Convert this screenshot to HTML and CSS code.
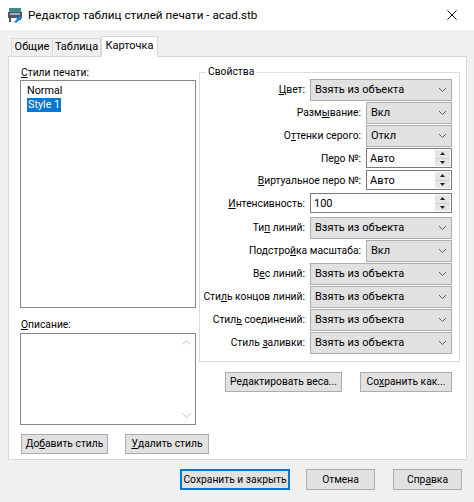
FILE: index.html
```html
<!DOCTYPE html>
<html lang="ru">
<head>
<meta charset="utf-8">
<title>Редактор таблиц стилей печати</title>
<link rel="stylesheet" href="styles.css">
</head>
<body>
<div class="window">
  <div class="titlebar">
    <svg class="appicon" width="16" height="16" viewBox="0 0 16 16">
      <rect x="2" y="1" width="12" height="4" fill="#3c8c8c"/>
      <rect x="1" y="5" width="14" height="6" fill="#555"/>
      <rect x="3" y="6" width="10" height="2" fill="#9ad"/>
      <rect x="2" y="11" width="2" height="4" fill="#555"/>
      <rect x="12" y="11" width="2" height="2" fill="#555"/>
      <path d="M7 15 L13 9 L15 11 L9 16 Z" fill="#1e7fd8"/>
      <path d="M9 10 L11 12" stroke="#1e7fd8" stroke-width="1.5"/>
    </svg>
    <span class="title">Редактор таблиц стилей печати - acad.stb</span>
    <svg class="close" width="10" height="10" viewBox="0 0 10 10">
      <path d="M0.5 0.5 L9.5 9.5 M9.5 0.5 L0.5 9.5" stroke="#111" stroke-width="1"/>
    </svg>
  </div>
  <div class="body">
    <div class="tabs">
      <div class="tab t1">Общие</div>
      <div class="tab t2">Таблица</div>
      <div class="tab t3 active">Карточка</div>
    </div>
    <div class="panel">
      <div class="leftcol">
        <div class="lbl"><u>С</u>тили печати:</div>
        <div class="listbox">
          <div class="item">Normal</div>
          <div class="item"><span class="sel">Style 1</span></div>
        </div>
        <div class="lbl desc-lbl"><u>О</u>писание:</div>
        <div class="textarea">
          <div class="ta-text"></div>
          <div class="vscroll">
            <svg width="9" height="5" viewBox="0 0 9 5"><path d="M0.5 4.5 L4.5 0.5 L8.5 4.5" fill="none" stroke="#c2c2c2" stroke-width="1"/></svg>
            <svg width="9" height="5" viewBox="0 0 9 5"><path d="M0.5 0.5 L4.5 4.5 L8.5 0.5" fill="none" stroke="#c2c2c2" stroke-width="1"/></svg>
          </div>
        </div>
        <div class="btnrow">
          <div class="btn add">До<u>б</u>авить стиль</div>
          <div class="btn del"><u>У</u>далить стиль</div>
        </div>
      </div>
      <div class="rightcol">
        <fieldset class="group">
          <legend>Свойства</legend>
          <div class="row"><span class="rl"><u>Ц</u>вет:</span><div class="combo wide"><span>Взять из объекта</span><svg width="7" height="4" viewBox="0 0 7 4"><path d="M0 0 L3.5 3.5 L7 0" fill="none" stroke="#606060"/></svg></div></div>
          <div class="row"><span class="rl">Разм<u>ы</u>вание:</span><div class="combo narrow"><span>Вкл</span><svg width="7" height="4" viewBox="0 0 7 4"><path d="M0 0 L3.5 3.5 L7 0" fill="none" stroke="#606060"/></svg></div></div>
          <div class="row"><span class="rl">О<u>т</u>тенки серого:</span><div class="combo narrow"><span>Откл</span><svg width="7" height="4" viewBox="0 0 7 4"><path d="M0 0 L3.5 3.5 L7 0" fill="none" stroke="#606060"/></svg></div></div>
          <div class="row er"><span class="rl">Пе<u>р</u>о №:</span><div class="edit narrow"><span>Авто</span><div class="spin"><div class="sp"><svg width="5" height="3" viewBox="0 0 5 3"><path d="M0 3 L2.5 0 L5 3 Z" fill="#222"/></svg></div><div class="sp"><svg width="5" height="3" viewBox="0 0 5 3"><path d="M0 0 L2.5 3 L5 0 Z" fill="#222"/></svg></div></div></div></div>
          <div class="row er"><span class="rl"><u>В</u>иртуальное перо №:</span><div class="edit narrow"><span>Авто</span><div class="spin"><div class="sp"><svg width="5" height="3" viewBox="0 0 5 3"><path d="M0 3 L2.5 0 L5 3 Z" fill="#222"/></svg></div><div class="sp"><svg width="5" height="3" viewBox="0 0 5 3"><path d="M0 0 L2.5 3 L5 0 Z" fill="#222"/></svg></div></div></div></div>
          <div class="row er last-edit"><span class="rl"><u>И</u>нтенсивность:</span><div class="edit wide"><span>100</span><div class="spin"><div class="sp"><svg width="5" height="3" viewBox="0 0 5 3"><path d="M0 3 L2.5 0 L5 3 Z" fill="#222"/></svg></div><div class="sp"><svg width="5" height="3" viewBox="0 0 5 3"><path d="M0 0 L2.5 3 L5 0 Z" fill="#222"/></svg></div></div></div></div>
          <div class="row"><span class="rl">Ти<u>п</u> линий:</span><div class="combo wide"><span>Взять из объекта</span><svg width="7" height="4" viewBox="0 0 7 4"><path d="M0 0 L3.5 3.5 L7 0" fill="none" stroke="#606060"/></svg></div></div>
          <div class="row"><span class="rl">Подстро<u>й</u>ка масштаба:</span><div class="combo narrow"><span>Вкл</span><svg width="7" height="4" viewBox="0 0 7 4"><path d="M0 0 L3.5 3.5 L7 0" fill="none" stroke="#606060"/></svg></div></div>
          <div class="row"><span class="rl">В<u>е</u>с линий:</span><div class="combo wide"><span>Взять из объекта</span><svg width="7" height="4" viewBox="0 0 7 4"><path d="M0 0 L3.5 3.5 L7 0" fill="none" stroke="#606060"/></svg></div></div>
          <div class="row"><span class="rl">Сти<u>л</u>ь концов линий:</span><div class="combo wide"><span>Взять из объекта</span><svg width="7" height="4" viewBox="0 0 7 4"><path d="M0 0 L3.5 3.5 L7 0" fill="none" stroke="#606060"/></svg></div></div>
          <div class="row"><span class="rl">Стил<u>ь</u> соединений:</span><div class="combo wide"><span>Взять из объекта</span><svg width="7" height="4" viewBox="0 0 7 4"><path d="M0 0 L3.5 3.5 L7 0" fill="none" stroke="#606060"/></svg></div></div>
          <div class="row"><span class="rl">Стиль <u>з</u>аливки:</span><div class="combo wide"><span>Взять из объекта</span><svg width="7" height="4" viewBox="0 0 7 4"><path d="M0 0 L3.5 3.5 L7 0" fill="none" stroke="#606060"/></svg></div></div>
        </fieldset>
        <div class="btnrow2">
          <div class="btn edw">Ре<u>д</u>актировать веса...</div>
          <div class="btn sva">Со<u>х</u>ранить как...</div>
        </div>
      </div>
    </div>
    <div class="footer">
      <div class="btn default">Сохранить и закрыть</div>
      <div class="btn cancel">Отмена</div>
      <div class="btn help">Спр<u>а</u>вка</div>
    </div>
  </div>
</div>
</body>
</html>
```
FILE: styles.css
```css
* { box-sizing: border-box; }
html, body { margin: 0; padding: 0; }
body {
  width: 474px;
  height: 502px;
  overflow: hidden;
  font-family: Roboto, "Liberation Sans", Arial, sans-serif;
  font-size: 10.3px;
  color: #000;
  background: #f0f0f0;
}
u { text-decoration: underline; text-underline-offset: 1px; }
.window { width: 474px; height: 502px; background: #f0f0f0; }

.titlebar {
  height: 30px;
  background: #fff;
  display: flex;
  align-items: center;
  padding-left: 7px;
}
.appicon { flex: none; }
.title {
  font-size: 11.7px;
  margin-left: 5px;
  flex: 1;
  color: #000;
  white-space: nowrap;
}
.close { margin-right: 17px; flex: none; }

.body { padding: 0 7px 0 8px; }

.tabs {
  height: 26px;
  display: flex;
  align-items: flex-end;
  padding-left: 3px;
}
.tab {
  height: 18px;
  line-height: 16px;
  border: 1px solid #d9d9d9;
  border-bottom: none;
  background: #f0f0f0;
  text-align: center;
  white-space: nowrap;
  font-size: 11px;
}
.t1 { width: 42px; }
.t2 { width: 48px; border-left: none; }
.t3 { width: 57px; }
.tab.active {
  height: 21px;
  line-height: 18px;
  background: #fff;
  margin-bottom: -1px;
  position: relative;
  z-index: 1;
}

.panel {
  height: 404px;
  border: 1px solid #d9d9d9;
  background: #fff;
  display: flex;
  padding: 9px 6px 0 11px;
}

.leftcol { width: 176px; flex: none; display: flex; flex-direction: column; }
.lbl { height: 14px; line-height: 14px; padding-left: 1px; }
.listbox {
  height: 228px;
  border: 1px solid #828790;
  background: #fff;
  padding: 3px 0 0 6px;
}
.item { height: 14px; line-height: 14px; font-size: 10.8px; }
.sel {
  display: inline-block;
  background: #0078d7;
  color: #fff;
  padding: 0 1px;
  height: 14px;
}
.desc-lbl { margin-top: 10px; }
.textarea {
  margin-top: 1px;
  height: 92px;
  border: 1px solid #828790;
  background: #fff;
  display: flex;
}
.ta-text { flex: 1; }
.vscroll {
  width: 17px;
  background: #fff;
  display: flex;
  flex-direction: column;
  justify-content: space-between;
  align-items: center;
  padding: 6px 0 6px;
}
.btnrow { display: flex; margin-top: 9px; gap: 17px; }

.btn {
  height: 20px;
  background: #e1e1e1;
  border: 1px solid #adadad;
  display: flex;
  align-items: center;
  justify-content: center;
  line-height: 14px;
  white-space: nowrap;
  flex: none;
}
.add { width: 87px; margin-left: 1px; }
.del { width: 84px; }

.rightcol { width: 261px; flex: none; margin-left: 3px; display: flex; flex-direction: column; }
.group {
  margin: 0;
  border: 1px solid #dcdcdc;
  padding: 0 7px 7px 0;
  min-width: 0;
}
.group legend {
  padding: 0 2px;
  margin-left: 6px;
  line-height: 12px;
  height: 12px;
}
.row {
  display: flex;
  justify-content: flex-end;
  align-items: center;
  height: 23px;
}
.row.er { height: 22px; }
.row.last-edit { height: 24px; margin-bottom: 1px; }
.rl { margin-right: 5px; white-space: nowrap; }
.combo {
  height: 22px;
  background: #e1e1e1;
  border: 1px solid #adadad;
  display: flex;
  align-items: center;
  justify-content: space-between;
  padding: 0 5px 0 4px;
  white-space: nowrap;
  font-size: 11px;
  flex: none;
}
.combo svg { flex: none; }
.wide { width: 142px; }
.narrow { width: 86px; }
.edit {
  height: 20px;
  background: #fff;
  border: 1px solid #7a7a7a;
  display: flex;
  align-items: center;
  justify-content: space-between;
  padding: 0 1px 0 3px;
  font-size: 11px;
  flex: none;
}
.spin {
  width: 15px;
  height: 16px;
  display: flex;
  flex-direction: column;
  background: #e6e6e6;
}
.sp {
  flex: 1;
  display: flex;
  align-items: center;
  justify-content: center;
}
.sp + .sp { border-top: 1px solid #cfcfcf; }

.btnrow2 {
  display: flex;
  justify-content: flex-end;
  gap: 18px;
  padding-right: 8px;
  margin-top: 10px;
}
.edw { width: 117px; }
.sva { width: 92px; }

.footer {
  display: flex;
  justify-content: flex-end;
  gap: 16px;
  padding-right: 5px;
  margin-top: 9px;
}
.default { width: 110px; height: 21px; border: 2px solid #0078d7; }
.cancel { width: 69px; height: 21px; }
.help { width: 69px; height: 21px; margin-left: 2px; }
```
